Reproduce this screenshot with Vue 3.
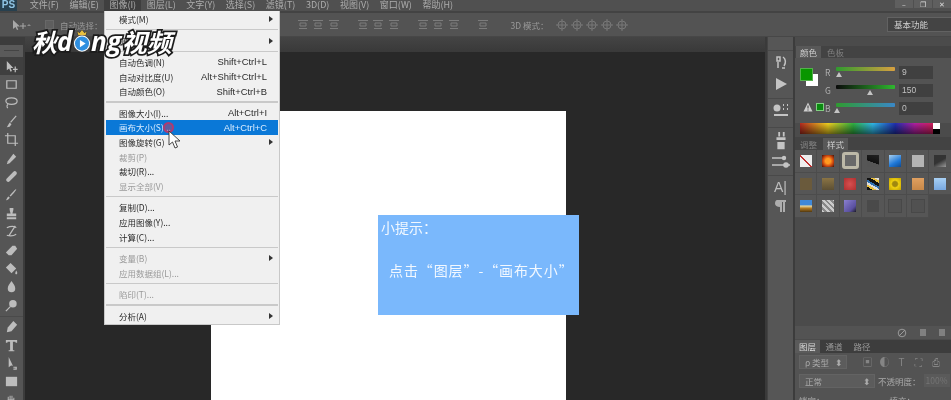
<template>
  <div class="app">
    <div class="menubar">
      <span class="ps">PS</span>
      <span
        v-for="item in menuTitles"
        :key="item"
        class="menu-title"
        :class="{ active: item === '图像(I)' }"
      >{{ item }}</span>
      <div class="win-buttons">
        <span class="win-btn">–</span>
        <span class="win-btn">❐</span>
        <span class="win-btn">✕</span>
      </div>
    </div>

    <div class="optionsbar">
      <svg class="opt-move" width="22" height="14" viewBox="0 0 22 14">
        <path d="M2 2v9l2.500-2 1.500 3 1.300-.6-1.500-3H9z" fill="#a8a8a8" />
        <path d="M12 5v6M9 8h6" stroke="#a8a8a8" fill="none" />
        <path d="M18 6l2 2-4 0z" fill="#8c8c8c" />
      </svg>
      <span class="opt-check"></span>
      <span class="opt-text">自动选择：</span>
      <div class="opt-groups">
        <div v-for="(group, i) in optionGroups" :key="i" class="opt-group">
          <svg v-for="n in group" :key="n" width="14" height="12" viewBox="0 0 14 12">
            <path d="M2 1.500h10M4 4h6v3H4zM3 9.500h8" stroke="#7c7c7c" fill="none" />
          </svg>
        </div>
      </div>
      <span class="opt-text mode">3D 模式：</span>
      <div class="opt-3d">
        <svg v-for="n in 5" :key="n" width="14" height="14" viewBox="0 0 14 14">
          <circle cx="7" cy="7" r="4" stroke="#787878" fill="none" />
          <path d="M7 1v12M1 7h12" stroke="#787878" fill="none" />
        </svg>
      </div>
      <div class="workspace-select">基本功能</div>
    </div>

    <div class="main">
      <div class="toolbar">
        <div class="tool-head">
          <span class="tool-grip"></span>
        </div>
        <div
          v-for="(tool, i) in tools"
          :key="i"
          class="tool"
          :class="{ selected: i === 0, spaced: i === 14 }"
        >
          <svg width="15" height="15" viewBox="0 0 16 16">
            <path v-if="tool.f" :d="tool.f" fill="#bdbdbd" />
            <path v-if="tool.s" :d="tool.s" fill="none" stroke="#bdbdbd" stroke-width="1.300" />
          </svg>
        </div>
      </div>

      <div class="center">
        <div class="doc-strip"></div>
        <div class="workspace">
          <div class="canvas"></div>
        </div>
      </div>

      <div class="icon-strip">
        <div class="strip-group">
          <svg width="18" height="18" viewBox="0 0 18 18"><path d="M5 3h3v4H5zM6 8v6M11 3c3 2 3 6 1 9M10 14h3" fill="none" stroke="#c4c4c4" stroke-width="1.500" /></svg>
          <svg width="18" height="18" viewBox="0 0 18 18"><path d="M4 3l11 6-11 6z" fill="#c4c4c4" /></svg>
        </div>
        <div class="strip-group short">
          <svg width="20" height="18" viewBox="0 0 20 18"><circle cx="6" cy="6" r="3.500" fill="#c4c4c4" /><path d="M12 3h1M16 3h1M12 7h1M16 7h1M3 13h14" stroke="#c4c4c4" stroke-width="2" /></svg>
        </div>
        <div class="strip-group">
          <svg width="18" height="20" viewBox="0 0 18 22"><path d="M6 1h2v5H6zM11 1h2v5h-2zM4 7h10v3H4zM5 12h8v8H5z" fill="#c4c4c4" /></svg>
          <svg width="22" height="16" viewBox="0 0 22 16"><path d="M2 4h14M2 11h18" stroke="#c4c4c4" stroke-width="1.500" /><circle cx="14" cy="4" r="2.200" fill="#c4c4c4" /><circle cx="16" cy="11" r="2.800" fill="#c4c4c4" /></svg>
        </div>
        <div class="strip-group">
          <span class="strip-a">A|</span>
          <svg width="16" height="16" viewBox="0 0 16 16"><path d="M4 2h9v2h-1v10h-2V4H9v10H7V9C4 9 2 7.500 2 5.500S3 2 4 2z" fill="#adadad" /></svg>
        </div>
      </div>

      <div class="panels">
        <div class="tabs">
          <span class="tab on">颜色</span>
          <span class="tab">色板</span>
        </div>
        <div class="color-panel">
          <div class="swatches">
            <span class="swatch-bg"></span>
            <span class="swatch-fg"></span>
            <div class="warn-row">
              <svg width="10" height="10" viewBox="0 0 10 10"><path d="M5 .5l4.500 9H.5z" fill="#cfcfcf" /><path d="M5 3.500v3M5 7.500v1" stroke="#333" /></svg>
              <span class="websafe"></span>
            </div>
          </div>
          <div class="channels">
            <div v-for="ch in channels" :key="ch.name" class="channel">
              <span class="ch-name">{{ ch.name }}</span>
              <div class="ch-slider">
                <div class="ch-track" :style="{ background: ch.track }"></div>
                <span class="ch-thumb" :style="{ left: ch.pos + 'px' }"></span>
              </div>
              <span class="ch-value">{{ ch.value }}</span>
            </div>
          </div>
        </div>
        <div class="spectrum"><span class="spectrum-end"></span></div>

        <div class="tabs second">
          <span class="tab">调整</span>
          <span class="tab on">样式</span>
        </div>
        <div class="styles-panel">
          <div class="styles-grid">
            <div v-for="(style, i) in styleCells" :key="i" class="style-cell" :class="{ empty: !style }">
              <span v-if="style" class="style-chip" :class="{ ring: i === 2, plain: i === 18 || i === 19 }" :style="{ background: style }"></span>
            </div>
          </div>
        </div>
        <div class="panel-foot">
          <svg width="10" height="10" viewBox="0 0 10 10"><circle cx="5" cy="5" r="3.800" fill="none" stroke="#999" /><path d="M2 8l6-6" stroke="#999" /></svg>
          <span class="foot-page"></span>
          <span class="foot-bin"></span>
        </div>

        <div class="layer-tabs">
          <span class="ltab on">图层</span>
          <span class="ltab">通道</span>
          <span class="ltab">路径</span>
        </div>
        <div class="layers-body">
          <div class="layer-row">
            <div class="dropdown kind"><span>ρ 类型</span><span>⬍</span></div>
            <div class="filter-icons">
              <span v-for="glyph in filterGlyphs" :key="glyph">{{ glyph }}</span>
            </div>
          </div>
          <div class="layer-row">
            <div class="dropdown blend"><span>正常</span><span>⬍</span></div>
            <span class="opacity-label">不透明度：</span>
            <span class="opacity-value">100%</span>
          </div>
          <div class="layer-row lock">
            <span>锁定：</span>
            <span class="fill-label">填充：</span>
          </div>
        </div>
      </div>
    </div>

    <div class="menu">
      <template v-for="(row, i) in menuRows" :key="i">
        <div v-if="row.sep" class="menu-sep"></div>
        <div v-else class="menu-row" :class="{ off: row.off, hot: row.hot }">
          <span>{{ row.label }}</span>
          <span v-if="row.key" class="menu-key">{{ row.key }}</span>
          <span v-if="row.sub" class="menu-arrow"></span>
        </div>
      </template>
    </div>

    <div class="logo">
      <span class="logo-cn">秋</span><span class="logo-en">d</span><span class="logo-o">
        <svg width="18" height="27" viewBox="0 0 17 26">
          <path d="M4 4l2 2 2.500-3L11 6l2-2-1 4H5z" fill="#e8c040" stroke="#222" stroke-width=".6" />
          <circle cx="8.500" cy="16" r="6.800" fill="#2f8fe0" stroke="#fff" stroke-width="2" />
          <path d="M6.500 12.500L12 16l-5.500 3.500z" fill="#fff" />
        </svg>
      </span><span class="logo-en">ng</span><span class="logo-cn">视频</span>
    </div>

    <span class="click-ring"></span>
    <svg class="pointer" width="13" height="19" viewBox="0 0 13 19">
      <path d="M1 1v14l3.500-3 2.500 6 2.500-1-2.500-6H12z" fill="#fff" stroke="#333" stroke-width=".9" />
    </svg>

    <div class="tip">
      <div class="tip-title">小提示：</div>
      <div class="tip-text">点击“图层”-“画布大小”</div>
    </div>
  </div>
</template>

<script setup>
const menuTitles = ['文件(F)', '编辑(E)', '图像(I)', '图层(L)', '文字(Y)', '选择(S)', '滤镜(T)', '3D(D)', '视图(V)', '窗口(W)', '帮助(H)'];

const optionGroups = [3, 3, 3, 1];

const menuRows = [
  { label: '模式(M)', sub: true },
  { sep: true },
  { label: '调整(J)', sub: true },
  { sep: true },
  { label: '自动色调(N)', key: 'Shift+Ctrl+L' },
  { label: '自动对比度(U)', key: 'Alt+Shift+Ctrl+L' },
  { label: '自动颜色(O)', key: 'Shift+Ctrl+B' },
  { sep: true },
  { label: '图像大小(I)...', key: 'Alt+Ctrl+I' },
  { label: '画布大小(S)...', key: 'Alt+Ctrl+C', hot: true },
  { label: '图像旋转(G)', sub: true },
  { label: '裁剪(P)', off: true },
  { label: '裁切(R)...' },
  { label: '显示全部(V)', off: true },
  { sep: true },
  { label: '复制(D)...' },
  { label: '应用图像(Y)...' },
  { label: '计算(C)...' },
  { sep: true },
  { label: '变量(B)', sub: true, off: true },
  { label: '应用数据组(L)...', off: true },
  { sep: true },
  { label: '陷印(T)...', off: true },
  { sep: true },
  { label: '分析(A)', sub: true }
];

const tools = [
  { f: 'M3 2v10l2.500-2 1.500 3.500 1.500-.7L7 9.500h3z', s: 'M12 8v6M9.500 11h5' },
  { s: 'M3 4h10v8H3z' },
  { s: 'M8 3c3.500 0 6 1.500 6 3.500S11.500 10 8 10 2 8.500 2 6.500 4.500 3 8 3zM4 10c-1 1-1 3 0 4' },
  { s: 'M13 2L7 9', f: 'M6 9l2 2-2 2.500-3 .5z' },
  { s: 'M4 1v11h11M1 4h11v11' },
  { f: 'M10 3l3 3-7 7-3 1 1-3z' },
  { f: 'M3 10l7-7c1-1 2-1 3 0s1 2 0 3l-7 7c-1 1-2 1-3 0s-1-2 0-3z' },
  { f: 'M13 2c.5 1-3 5-6 8l-1-1c3-3 6-7 7-7zM5 10l1 1c0 2-2 3-4 3 1-1 1-3 3-4z' },
  { f: 'M6 2h4v2L9 8h4v3H3V8h4L6 4zM3 12h10v2H3z' },
  { s: 'M3 4c4-2 9-2 10 0M12 2L5 13M3 12c3 1 7 1 10-1' },
  { f: 'M9 3h3l2 3-6 7H5l-3-3z' },
  { f: 'M7 2l6 6-5 5-6-6zM13 10c1 1.500 1.500 2.500 1 3.500s-2 .5-2-.5.5-2 1-3z' },
  { f: 'M8 2c2 3 4 5 4 8a4 4 0 0 1-8 0c0-3 2-5 4-8z' },
  { f: 'M9.500 2a4 4 0 1 1 0 8 4 4 0 0 1 0-8z', s: 'M7 9l-5 5' },
  { f: 'M10 2l4 4-6 7-5 1 1-5z' },
  { f: 'M2 2h12v3h-1.500l-.5-1H9.500v9H11v1H5v-1h1.500V4H4l-.5 1H2z' },
  { f: 'M5 1v11l2.500-2 2 .5z', s: 'M10 12h3v2h-3' },
  { f: 'M2 3h12v10H2z' },
  { f: 'M4 7V4h1v3h1V3h1v4h1V3h1v4h1V5h1v6c0 2-1 3-3 3H7c-2 0-4-3-4-5z' }
];

const channels = [
  { name: 'R', value: '9', pos: 0, track: 'linear-gradient(90deg, #2f9a2f, #d8a040)' },
  { name: 'G', value: '150', pos: 31, track: 'linear-gradient(90deg, #0a0a0a, #2fb82f)' },
  { name: 'B', value: '0', pos: -2, track: 'linear-gradient(90deg, #2f9a2f, #3a88c8)' }
];

const styleCells = [
  'linear-gradient(45deg, #eee 42%, #c03030 42%, #c03030 54%, #eee 54%)',
  'radial-gradient(circle, #ff9a20 30%, #d04a10 60%, #401008 100%)',
  '#696969',
  'linear-gradient(20deg, #555 40%, #111 42%, #222 100%)',
  'linear-gradient(150deg, #a8d0f0, #1f78d8 60%, #104a90)',
  '#b4b4b4',
  'linear-gradient(150deg, #333 50%, #999 100%)',
  '#6a5a3c',
  'linear-gradient(#8a7444, #5c4f34)',
  'radial-gradient(circle, #d85050, #b03030)',
  'repeating-linear-gradient(30deg, #111 0 3px, #e8c040 3px 5px, #ddd 5px 7px, #3070b0 7px 9px)',
  'radial-gradient(circle, #a08810 28%, #f0d010 45%, #c0a000 100%)',
  'linear-gradient(#e0a060, #c88848)',
  'linear-gradient(#a8d0f4, #78a8e0)',
  'linear-gradient(#3f88d8 40%, #e8d8a0 50%, #b07820 70%, #503810)',
  'repeating-linear-gradient(45deg, #ccc 0 2px, #888 2px 4px)',
  'linear-gradient(135deg, #8a80d0, #5a50a0 70%, #1c1c28)',
  '#4a4a4a',
  '#515151',
  '#515151',
  null
];

const filterGlyphs = ['▣', '◐', 'T', '⛶', '⎙'];
</script>

<style>
html,
body {
  margin: 0;
  background: #3a3a3a;
}
</style>

<style scoped>
.app {
  position: relative;
  width: 951px;
  height: 400px;
  overflow: hidden;
  display: flex;
  flex-direction: column;
  background: #3a3a3a;
  color: #c4c4c4;
  font-family: "Noto Sans CJK SC", "Liberation Sans", sans-serif;
  font-size: 8.500px;
  filter: blur(0.6px);
}

/* top bars */
.menubar {
  height: 11px;
  flex: none;
  display: flex;
  align-items: stretch;
  background: #505050;
  color: #adadad;
}

.ps {
  width: 17px;
  margin-right: 7.500px;
  background: #27404f;
  color: #8fc4e4;
  font: bold 10px/9px "Liberation Sans", sans-serif;
  text-align: center;
}

.menu-title {
  padding: 0 5.300px;
  font-size: 9px;
  line-height: 9px;
  white-space: nowrap;
}

.menu-title.active {
  background: #3f3f3f;
}

.win-buttons {
  margin-left: auto;
  display: flex;
  align-items: flex-start;
}

.win-btn {
  width: 18px;
  height: 8px;
  margin-left: 1px;
  font-size: 7px;
  line-height: 8px;
  text-align: center;
  background: #5f5f5f;
  color: #ddd;
}

.optionsbar {
  height: 26px;
  flex: none;
  display: flex;
  align-items: center;
  padding-left: 11px;
  box-sizing: border-box;
  border-top: 2px solid #434343;
  border-bottom: 1px solid #474747;
  background: #535353;
}

.opt-move {
  flex: none;
}

.opt-check {
  width: 7px;
  height: 7px;
  margin-left: 12px;
  background: #5e5e5e;
  border: 1px solid #686868;
}

.opt-text {
  margin-left: 6px;
  color: #999;
  white-space: nowrap;
}

.opt-groups {
  display: flex;
  gap: 15px;
  margin-left: 193px;
}

.opt-group {
  display: flex;
  gap: 1.500px;
}

.opt-text.mode {
  margin-left: 21px;
}

.opt-3d {
  display: flex;
  gap: 1px;
  margin-left: 6px;
}

.workspace-select {
  margin-left: auto;
  width: 64px;
  height: 15px;
  box-sizing: border-box;
  padding-left: 6px;
  background: #444;
  border: 1px solid #626262;
  border-right: none;
  color: #d0d0d0;
  line-height: 13px;
}

/* body */
.main {
  flex: 1;
  display: flex;
  min-height: 0;
}

.toolbar {
  width: 25px;
  box-sizing: border-box;
  flex: none;
  background: #555;
  border-right: 2px solid #3c3c3c;
  display: flex;
  flex-direction: column;
  align-items: center;
}

.tool-head {
  align-self: stretch;
  height: 20px;
  background: linear-gradient(#3c3c3c 0 8px, #5a5a5a 8px);
  flex: none;
}

.tool-grip {
  display: block;
  height: 1px;
  margin: 13px 4px 0;
  background: #444;
}

.tool {
  width: 23px;
  height: 18.400px;
  flex: none;
  display: flex;
  align-items: center;
  justify-content: center;
}

.tool.selected {
  background: #3f3f3f;
}

.tool.spaced {
  margin-top: 2px;
  border-top: 1px solid #4a4a4a;
}

.center {
  flex: 1;
  display: flex;
  flex-direction: column;
  min-width: 0;
}

.doc-strip {
  height: 15px;
  flex: none;
  background: linear-gradient(#444, #393939);
}

.workspace {
  flex: 1;
  display: flex;
  padding: 59px 0 0 186px;
  background: #282828;
}

.canvas {
  width: 355px;
  height: 289px;
  background: #fff;
}

.icon-strip {
  width: 28px;
  flex: none;
  margin-left: 2px;
  padding-top: 13px;
  box-sizing: border-box;
  background: #565656;
  border-left: 1px solid #444;
  border-right: 2px solid #3c3c3c;
}

.strip-group {
  display: flex;
  flex-direction: column;
  align-items: center;
  gap: 3px;
  height: 48px;
  box-sizing: border-box;
  padding-top: 3px;
  border-top: 1px solid #494949;
}

.strip-group.short {
  height: 29px;
}

.strip-a {
  font: 14px/16px "Liberation Sans", sans-serif;
  color: #bdbdbd;
}

.panels {
  width: 156px;
  flex: none;
  display: flex;
  flex-direction: column;
  background: #4b4b4b;
}

.tabs {
  height: 12px;
  margin-top: 9px;
  flex: none;
  display: flex;
  align-items: stretch;
  padding-left: 1px;
  background: #434343;
}

.tabs.second {
  margin-top: 3px;
  height: 13px;
  padding-top: 1px;
  box-sizing: border-box;
}

.tab {
  padding: 0 4px;
  margin-right: 2px;
  line-height: 12px;
  color: #808080;
}

.tab.on {
  background: #585858;
  color: #d0d0d0;
}

.color-panel {
  display: flex;
  height: 65px;
  flex: none;
  background: #535353;
}

.swatches {
  position: relative;
  width: 30px;
  flex: none;
}

.swatch-fg {
  position: absolute;
  left: 5px;
  top: 10px;
  width: 11px;
  height: 11px;
  background: #099600;
  border: 1px solid #54b04c;
}

.swatch-bg {
  position: absolute;
  left: 11px;
  top: 16px;
  width: 12px;
  height: 12px;
  background: #fff;
}

.warn-row {
  position: absolute;
  left: 8px;
  top: 44px;
  display: flex;
  align-items: center;
  gap: 3px;
}

.websafe {
  width: 6px;
  height: 6px;
  background: #0a8a10;
  border: 1px solid #80d080;
}

.channels {
  flex: 1;
  padding-top: 7px;
  display: flex;
  flex-direction: column;
  gap: 4px;
}

.channel {
  display: flex;
  align-items: center;
  height: 14px;
}

.ch-name {
  width: 11px;
  color: #b0b0b0;
}

.ch-slider {
  position: relative;
  width: 59px;
  height: 14px;
}

.ch-track {
  height: 4px;
  margin-top: 2px;
  border-radius: 1px;
}

.ch-thumb {
  position: absolute;
  top: 7px;
  width: 0;
  height: 0;
  border: 3px solid transparent;
  border-top: none;
  border-bottom: 5px solid #c4c4c4;
}

.ch-value {
  width: 34px;
  height: 13px;
  box-sizing: border-box;
  margin-left: 4px;
  padding-left: 3px;
  background: #404040;
  color: #c0c0c0;
  font: 8.500px/13px "Liberation Sans", sans-serif;
}

.spectrum {
  height: 11px;
  flex: none;
  margin: 0 11px 0 5px;
  position: relative;
  background:
    linear-gradient(rgba(0, 0, 0, 0), rgba(0, 0, 0, 0.55)),
    linear-gradient(90deg, #b52a20, #f0d020 20%, #30b040 38%, #30b8e8 52%, #2030b0 68%, #b020a0 82%, #e02040);
}

.spectrum-end {
  position: absolute;
  right: 0;
  top: 0;
  width: 7px;
  height: 100%;
  background: linear-gradient(#fff 50%, #000 50%);
}

.styles-panel {
  flex: 1;
  background: #4b4b4b;
  overflow: hidden;
}

.styles-grid {
  display: grid;
  grid-template-columns: repeat(7, 22.400px);
  grid-auto-rows: 22.700px;
}

.style-cell {
  display: flex;
  align-items: center;
  justify-content: center;
  background: #565656;
  border-right: 1px solid #4c4c4c;
  border-bottom: 1px solid #4c4c4c;
  box-sizing: border-box;
}

.style-cell.empty {
  background: none;
  border: none;
}

.style-chip {
  width: 12px;
  height: 12px;
}

.style-chip.ring {
  width: 11px;
  height: 11px;
  border: 3px solid #bdb9a8;
  border-radius: 3px;
}

.style-chip.plain {
  border: 1px solid #484848;
}

.panel-foot {
  height: 13px;
  flex: none;
  display: flex;
  align-items: center;
  justify-content: flex-end;
  gap: 13px;
  padding-right: 6px;
  background: #535353;
}

.foot-page,
.foot-bin {
  width: 6px;
  height: 7px;
  background: #808080;
}

.layer-tabs {
  height: 13px;
  margin-top: 1px;
  flex: none;
  display: flex;
  background: #3d3d3d;
}

.ltab {
  width: 28px;
  text-align: center;
  line-height: 13px;
  color: #999;
}

.ltab.on {
  width: 25px;
  background: #5a5a5a;
  color: #dadada;
}

.layers-body {
  height: 46px;
  flex: none;
  padding: 1px 0 0 4px;
  background: #535353;
  overflow: hidden;
}

.layer-row {
  display: flex;
  align-items: center;
  height: 15px;
  margin-bottom: 4px;
  white-space: nowrap;
}

.dropdown {
  display: flex;
  justify-content: space-between;
  height: 14px;
  box-sizing: border-box;
  padding: 0 3px 0 5px;
  line-height: 13px;
  background: #5c5c5c;
  border: 1px solid #636363;
  color: #aaa;
}

.dropdown.kind {
  width: 48px;
}

.dropdown.blend {
  width: 76px;
}

.filter-icons {
  display: flex;
  gap: 6px;
  margin-left: 15px;
  color: #858585;
  font-size: 10px;
}

.filter-icons span {
  width: 11px;
  text-align: center;
}

.opacity-label {
  margin-left: 3px;
  color: #aaa;
}

.opacity-value {
  margin-left: 3px;
  padding: 0 2px;
  width: 22px;
  background: #5a5a5a;
  color: #747474;
  line-height: 13px;
}

.lock {
  color: #aaa;
  margin-top: 4px;
}

.fill-label {
  margin-left: 65px;
}

/* image menu */
.menu {
  position: absolute;
  left: 104px;
  top: 11px;
  width: 176px;
  height: 314px;
  padding: 0.800px 1px 0;
  box-sizing: border-box;
  background: #f0f0f0;
  border: 1px solid #c8c8c8;
  border-top: none;
  color: #2a2a2a;
}

.menu-row {
  position: relative;
  height: 14.700px;
  display: flex;
  align-items: center;
  justify-content: space-between;
  padding: 0 11px 0 13px;
  line-height: 14px;
}

.menu-row.off {
  color: #9a9a9a;
}

.menu-row.hot {
  background: #0a78d7;
  color: #d8ecff;
}

.menu-key {
  margin-top: 1px;
  font-family: "Liberation Sans", sans-serif;
  font-size: 9.400px;
}

.menu-arrow {
  position: absolute;
  right: 5px;
  top: 4.500px;
  border-left: 4px solid #333;
  border-top: 3px solid transparent;
  border-bottom: 3px solid transparent;
}

.menu-sep {
  height: 1.300px;
  margin: 2.700px 0;
  background: #c9c9c9;
}

.click-ring {
  position: absolute;
  left: 163px;
  top: 122px;
  width: 7px;
  height: 7px;
  border: 2px solid #b03a70;
  border-radius: 50%;
  background: rgba(200, 60, 90, 0.45);
}

.pointer {
  position: absolute;
  left: 168px;
  top: 130px;
}

/* logo watermark */
.logo {
  position: absolute;
  left: 32px;
  top: 23px;
  height: 33px;
  display: flex;
  align-items: flex-end;
  font-style: italic;
  font-weight: 700;
  color: #fff;
  white-space: nowrap;
  -webkit-text-stroke: 3.500px #1c1c1c;
  paint-order: stroke fill;
}

.logo-cn {
  font-family: "Noto Sans CJK SC", sans-serif;
  font-size: 25px;
  line-height: 30px;
}

.logo-en {
  font-family: "Open Sans", sans-serif;
  font-size: 26px;
  line-height: 29px;
  letter-spacing: 0.500px;
}

.logo-o {
  display: flex;
  align-items: flex-end;
  margin-bottom: 2px;
}

/* tip box */
.tip {
  position: absolute;
  left: 378px;
  top: 215px;
  width: 201px;
  height: 100px;
  background: #7ab8fc;
  color: #f2f8ff;
  font-size: 14px;
  line-height: 20px;
  font-family: "Noto Sans CJK SC", sans-serif;
}

.tip-title {
  padding: 2px 0 0 3px;
}

.tip-text {
  margin-top: 23px;
  padding-left: 11px;
  letter-spacing: 0.900px;
  white-space: nowrap;
}
</style>
